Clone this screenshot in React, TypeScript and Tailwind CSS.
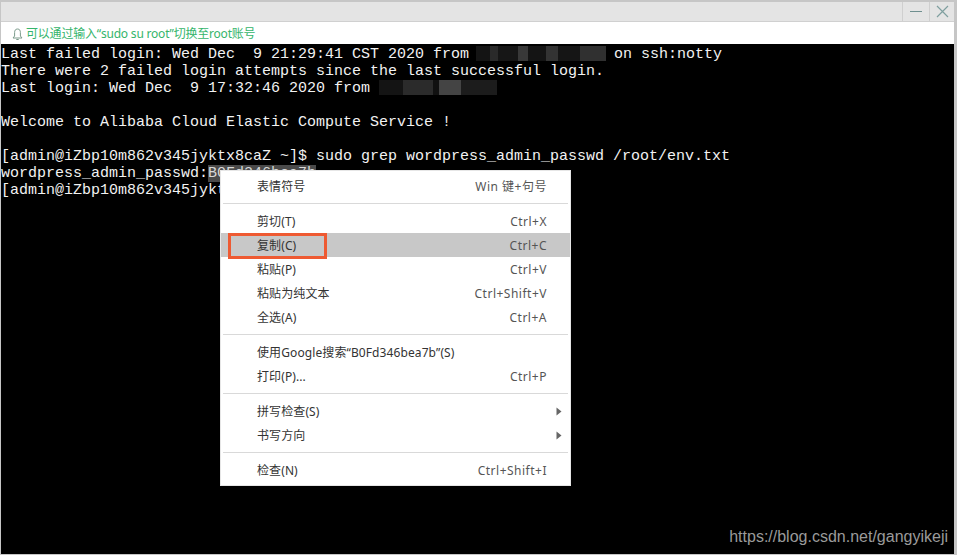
import React from "react";

const Mosaic = ({ parts }: { parts: [string, string][] }) => (
  <span className="inline-flex h-[15px] align-[-3px]">
    {parts.map(([w, c], i) => (
      <span key={i} className={`${w} ${c} h-full`} />
    ))}
  </span>
);

const Row = ({ label, keys, arrow, active }: { label: string; keys?: string; arrow?: boolean; active?: boolean }) => (
  <div className={`flex h-6 items-center justify-between pt-[2px] pl-[36px] pr-[23px] ${active ? "bg-[#c8c8c8]" : ""}`}>
    <span className="tracking-[0.1px]">{label}</span>
    {keys && <span className="tracking-[0.5px] text-[#555]">{keys}</span>}
    {arrow && (
      <svg width="6" height="9" viewBox="0 0 6 9" className="-mr-[15px] -mt-[2px]">
        <path d="M0.5 0.5 L5.5 4.5 L0.5 8.5 Z" fill="#666" />
      </svg>
    )}
  </div>
);

const Sep = () => <div className="mx-[2px] my-[5px] h-px bg-[#d9d9d9]" />;

export default function App() {
  return (
    <div className="relative flex h-[555px] w-[957px] flex-col overflow-hidden border-t-2 border-r-3 border-b border-l border-[#c6c6c6] bg-white">
      <div className="flex h-[20px] shrink-0 justify-end border-b border-[#d0d0d0] bg-[#e4e4e4]">
        <div className="flex w-[27px] items-center justify-center border-l border-[#cfcfcf]">
          <div className="h-px w-[12px] bg-[#6f8f8f]" />
        </div>
        <div className="flex w-[25px] items-center justify-center border-l border-[#cfcfcf]">
          <svg width="13" height="13" viewBox="0 0 13 13">
            <path d="M1 1 L12 12 M12 1 L1 12" stroke="#7f9f9f" strokeWidth="1.2" />
          </svg>
        </div>
      </div>
      <div className="flex h-[22px] shrink-0 items-center gap-[3px] bg-white pt-[2px] pl-[11px] font-['Noto_Sans','Noto_Sans_CJK_SC',sans-serif] text-[12px] text-[#35b56b]">
        <svg width="11" height="13" viewBox="0 0 11 13" fill="none" stroke="#7a9a8a" strokeWidth="1">
          <path d="M5.5 1 C3.2 1 2.6 2.8 2.6 4.5 V8 L1 10 H10 L8.4 8 V4.5 C8.4 2.8 7.8 1 5.5 1 Z" />
          <path d="M4.3 11.5 H6.7" />
        </svg>
        <span className="tracking-[-0.2px]">可以通过输入“sudo su root”切换至root账号</span>
      </div>
      <div className="relative min-h-0 flex-1 bg-black pt-[2px] font-['Liberation_Mono',monospace] text-[15px] leading-[17px] whitespace-pre text-[#f2f2f2]">
        <div>
          Last failed login: Wed Dec  9 21:29:41 CST 2020 from{" "}
          <span className="-ml-[2px] mr-[8px] inline-flex align-[-3px]">
            <Mosaic
              parts={[
                ["w-[14px]", "bg-[#141414]"],
                ["w-[8px]", "bg-[#2a2a2a]"],
                ["w-[20px]", "bg-[#161616]"],
                ["w-[10px]", "bg-[#383838]"],
                ["w-[18px]", "bg-[#141414]"],
                ["w-[12px]", "bg-[#333333]"],
                ["w-[22px]", "bg-[#151515]"],
                ["w-[26px]", "bg-[#303030]"],
              ]}
            />
          </span>
          on ssh:notty
        </div>
        <div>There were 2 failed login attempts since the last successful login.</div>
        <div>
          Last login: Wed Dec  9 17:32:46 2020 from{" "}
          <Mosaic
            parts={[
              ["w-[24px]", "bg-[#141414]"],
              ["w-[30px]", "bg-[#2b2b2b]"],
              ["w-[6px]", "bg-[#111111]"],
              ["w-[22px]", "bg-[#444444]"],
              ["w-[36px]", "bg-[#1c1c1c]"],
            ]}
          />
        </div>
        <div>{" "}</div>
        <div>Welcome to Alibaba Cloud Elastic Compute Service !</div>
        <div>{" "}</div>
        <div>[admin@iZbp10m862v345jyktx8caZ ~]$ sudo grep wordpress_admin_passwd /root/env.txt</div>
        <div>
          wordpress_admin_passwd:<span className="bg-[#4a4a4a] text-[#d8d8d8]">B0Fd346bea7b</span>
        </div>
        <div>[admin@iZbp10m862v345jyktx8caZ ~]$ </div>

        <div className="absolute top-[126px] left-[219px] w-[351px] border border-[#e6e6e6] bg-white py-[3px] font-['Noto_Sans','Noto_Sans_CJK_SC',sans-serif] text-[12px] leading-[16px] text-[#333]">
          <Row label="表情符号" keys="Win 键+句号" />
          <Sep />
          <Row label="剪切(T)" keys="Ctrl+X" />
          <Row label="复制(C)" keys="Ctrl+C" active />
          <Row label="粘贴(P)" keys="Ctrl+V" />
          <Row label="粘贴为纯文本" keys="Ctrl+Shift+V" />
          <Row label="全选(A)" keys="Ctrl+A" />
          <Sep />
          <Row label="使用Google搜索“B0Fd346bea7b”(S)" />
          <Row label="打印(P)..." keys="Ctrl+P" />
          <Sep />
          <Row label="拼写检查(S)" arrow />
          <Row label="书写方向" arrow />
          <Sep />
          <Row label="检查(N)" keys="Ctrl+Shift+I" />
          <div className="absolute top-[62px] left-[7px] h-[26px] w-[99px] border-[3px] border-[#ee5a32]" />
        </div>

        <div className="absolute right-[6px] bottom-[8px] font-['Liberation_Sans',sans-serif] text-[16px] leading-[18px] text-[#9a9a9a]">
          https://blog.csdn.net/gangyikeji
        </div>
      </div>
    </div>
  );
}
